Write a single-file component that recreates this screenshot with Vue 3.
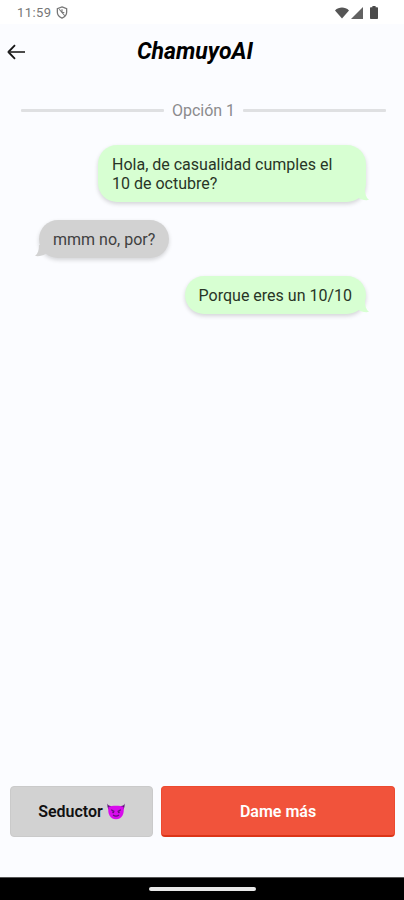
<script setup>
import { ref } from "vue";

const title = "ChamuyoAI";
const option = ref(1);

const messages = ref([
  { id: 1, side: "right", text: "Hola, de casualidad cumples el 10 de octubre?" },
  { id: 2, side: "left", text: "mmm no, por?" },
  { id: 3, side: "right", text: "Porque eres un 10/10" },
]);
</script>

<template>
  <div class="screen">
    <div class="status-bar">
      <span class="status-time">11:59</span>
      <svg class="status-dnd" viewBox="0 0 12 14" fill="none" aria-hidden="true">
        <path d="M6 1 L11 2.8 V6.8 C11 9.8 8.8 12 6 13 C3.2 12 1 9.8 1 6.8 V2.8 Z" stroke="#777" stroke-width="1.4" />
        <path d="M3 3.5 L9 10.5 M6 3.5 V7 L8.5 7" stroke="#777" stroke-width="1.2" />
      </svg>
      <div class="status-icons">
        <svg class="icon-wifi" viewBox="0 0 14 12" aria-hidden="true">
          <path d="M0 3.4 C4 -0.4 10 -0.4 14 3.4 L7 11.6 Z" fill="#555" />
        </svg>
        <svg class="icon-signal" viewBox="0 0 12 12" aria-hidden="true">
          <path d="M12 0 V12 H0 Z" fill="#626262" />
        </svg>
        <svg class="icon-battery" viewBox="0 0 8 13" aria-hidden="true">
          <path d="M2.4 0 H5.6 V1.3 H7.2 Q8 1.3 8 2.1 V12.2 Q8 13 7.2 13 H0.8 Q0 13 0 12.2 V2.1 Q0 1.3 0.8 1.3 H2.4 Z" fill="#4b4b4b" />
        </svg>
      </div>
    </div>

    <header class="header">
      <button class="back" type="button" aria-label="Volver">
        <svg viewBox="0 0 18 16" fill="none" aria-hidden="true">
          <path d="M8 1.2 L1.4 8 L8 14.8" stroke="#161616" stroke-width="1.8" stroke-linejoin="round" />
          <path d="M1.4 8 H18" stroke="#2b2b2b" stroke-width="1.7" />
        </svg>
      </button>
      <h1 class="title">{{ title }}</h1>
    </header>

    <main class="chat">
      <div class="divider">
        <span class="divider-line"></span>
        <span class="divider-text">Opción {{ option }}</span>
        <span class="divider-line"></span>
      </div>

      <div class="messages">
        <div v-for="m in messages" :key="m.id" class="bubble" :class="m.side">
          {{ m.text }}
          <svg class="tail" viewBox="0 0 12 12" aria-hidden="true">
            <path d="M0 0 H8 C8 5 9 8.5 12 11 C7 11.5 3 10.5 0 8 Z" />
          </svg>
        </div>
      </div>
    </main>

    <footer class="actions">
      <button class="btn tone" type="button">
        <span>Seductor</span>
        <svg class="devil" viewBox="0 0 18 17" aria-hidden="true">
          <path d="M0.6 0.6 C1 2.4 2.2 3 4.4 3.2 L2.2 7.2 C0.6 5.6 0 3 0.6 0.6 Z" fill="#5c1378" />
          <path d="M17.4 0.6 C17 2.4 15.8 3 13.6 3.2 L15.8 7.2 C17.4 5.6 18 3 17.4 0.6 Z" fill="#5c1378" />
          <path d="M1.5 4 C4 2.3 14 2.3 16.5 4 C17.6 10.5 15.2 16.3 9 16.3 C2.8 16.3 0.4 10.5 1.5 4 Z" fill="#d80bec" />
          <path d="M4.2 6.8 L7.4 8.6 M13.8 6.8 L10.6 8.6 M6 12 Q9 14.2 12 12" stroke="#611078" stroke-width="1.2" fill="none" />
          <circle cx="6.2" cy="9.3" r="1" fill="#611078" />
          <circle cx="11.8" cy="9.3" r="1" fill="#611078" />
        </svg>
      </button>
      <button class="btn more" type="button">Dame más</button>
    </footer>

    <div class="nav-bar">
      <span class="nav-handle"></span>
    </div>
  </div>
</template>

<style>
body {
  margin: 0;
}
</style>

<style scoped>
.screen {
  display: flex;
  flex-direction: column;
  height: 900px;
  background: #fbfcff;
  font-family: Roboto, "Liberation Sans", sans-serif;
  color: #111;
}

.status-bar {
  display: flex;
  align-items: center;
  box-sizing: border-box;
  height: 24px;
  padding: 1px 26px 0 17px;
  background: #fff;
}

.status-time {
  width: 34px;
  font-size: 13px;
  letter-spacing: 0.4px;
  color: #777;
}

.status-dnd {
  width: 12px;
  height: 13px;
  margin-left: 5px;
}

.status-icons {
  display: flex;
  align-items: center;
  margin-left: auto;
}

.icon-wifi {
  width: 14px;
  height: 12px;
}

.icon-signal {
  width: 12px;
  height: 12px;
  margin-left: 2px;
}

.icon-battery {
  width: 8px;
  height: 13px;
  margin-left: 7px;
}

.header {
  display: grid;
  grid-template-columns: 32px 1fr 32px;
  align-items: center;
  height: 56px;
}

.back {
  padding: 0 0 0 7px;
  border: none;
  background: none;
}

.back svg {
  display: block;
  width: 18px;
  height: 16px;
}

.title {
  margin: 0;
  padding-right: 14px;
  text-align: center;
  font-size: 23px;
  line-height: 28px;
  font-weight: 700;
  font-style: italic;
  color: #000;
}

.chat {
  flex: 1;
  padding: 20px 18px 0 21px;
}

.divider {
  display: flex;
  align-items: center;
  gap: 8px;
  height: 20px;
}

.divider-line {
  flex: 1;
  height: 3px;
  border-radius: 1px;
  background: #dfe0e2;
}

.divider-text {
  padding-top: 1px;
  font-size: 16px;
  line-height: 19px;
  color: #8b8b8d;
}

.messages {
  display: flex;
  flex-direction: column;
  align-items: flex-start;
  gap: 18px;
  padding: 25px 20px 0 18px;
}

.bubble {
  position: relative;
  box-sizing: border-box;
  max-width: 268px;
  padding: 10px 14px 9px;
  border-radius: 19px;
  font-size: 16px;
  line-height: 19px;
  box-shadow: 0 2px 4px rgba(0, 0, 0, 0.16);
}

.bubble.right {
  align-self: flex-end;
  background: #d7ffd2;
  color: #283526;
}

.bubble.left {
  background: #d2d2d2;
  color: #404040;
}

.tail {
  position: absolute;
  right: -3px;
  bottom: 1px;
  width: 12px;
  height: 12px;
}

.right .tail {
  fill: #d7ffd2;
}

.left .tail {
  right: auto;
  left: -4px;
  transform: scaleX(-1);
  fill: #d2d2d2;
}

.actions {
  display: flex;
  gap: 8px;
  padding: 0 9px 40px 10px;
}

.btn {
  display: flex;
  align-items: center;
  justify-content: center;
  box-sizing: border-box;
  height: 51px;
  padding: 0;
  border: none;
  border-radius: 4px;
  font-family: inherit;
  font-size: 16px;
  font-weight: 600;
}

.tone {
  width: 143px;
  gap: 4px;
  border: 1px solid #cacaca;
  background: #d2d2d2;
  color: #111;
}

.devil {
  width: 18px;
  height: 17px;
}

.more {
  flex: 1;
  border: 1px solid #ec4a30;
  border-bottom: 2px solid #dc3518;
  background: #f1533b;
  color: #fff;
}

.nav-bar {
  display: flex;
  align-items: center;
  justify-content: center;
  box-sizing: border-box;
  height: 23px;
  border-top: 1px solid #555;
  background: #000;
}

.nav-handle {
  width: 107px;
  height: 4px;
  border-radius: 2px;
  background: #e8e8e8;
}
</style>
